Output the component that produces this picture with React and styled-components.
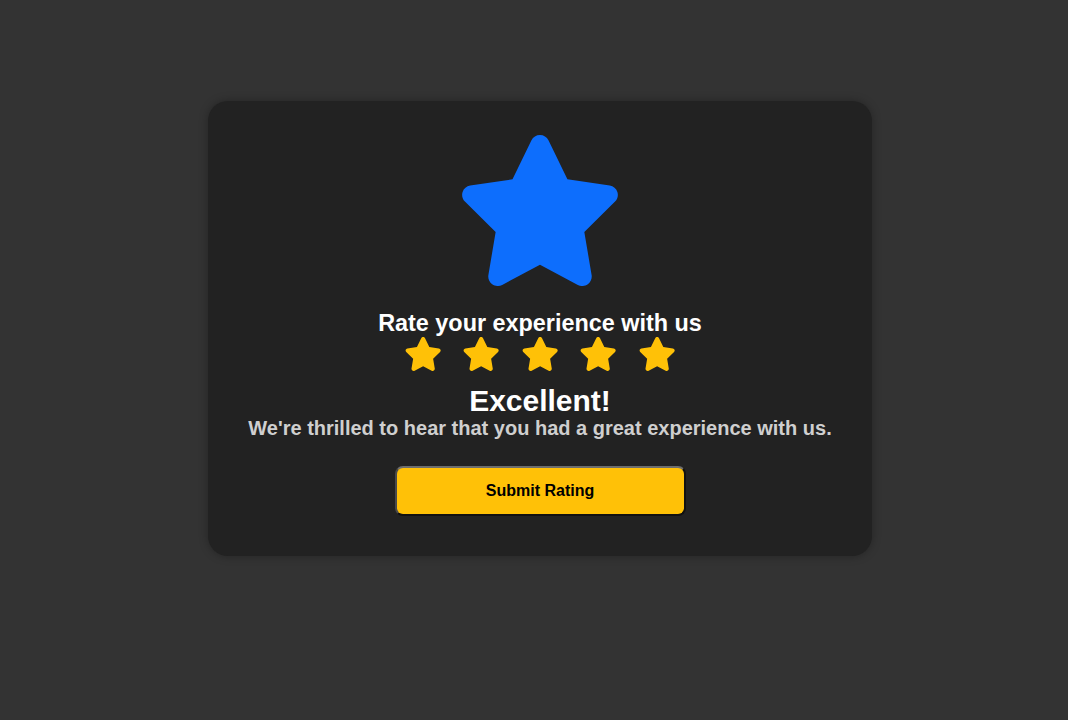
import React, { useState } from "react";
import styled, { createGlobalStyle } from "styled-components";

const Global = createGlobalStyle`
  html, body { margin: 0; padding: 0; background: #333333; }
  body { font-family: "Liberation Sans", Arial, sans-serif; }
`;

const Page = styled.div`
  min-height: 720px;
  display: flex;
  justify-content: center;
  align-items: flex-start;
  padding: 101px 0 0 12px;
  box-sizing: border-box;
`;

const Card = styled.div`
  width: 664px;
  box-sizing: border-box;
  background: #222222;
  border-radius: 20px;
  box-shadow: 0 0 10px rgba(0, 0, 0, 0.3);
  display: flex;
  flex-direction: column;
  align-items: center;
  padding: 34px 0 40px;
  color: #ffffff;
`;

const STAR =
  "M316.9 18C311.6 7 300.4 0 288.1 0s-23.4 7-28.8 18L195 150.3 51.4 171.5c-12 1.8-22 10.2-25.7 21.7s-.7 24.2 7.9 32.7L137.8 329 113.2 474.7c-2 12 3 24.2 12.9 31.3s23 8 33.8 2.3l128.3-68.5 128.3 68.5c10.8 5.7 23.9 4.9 33.8-2.3s14.9-19.3 12.9-31.3L438.5 329 542.7 225.9c8.6-8.5 11.7-21.2 7.9-32.7s-13.7-19.9-25.7-21.7L381.2 150.3 316.9 18z";

const Star = ({ height, color }) => (
  <svg width={(height * 576) / 512} height={height} viewBox="0 0 576 512" fill={color}>
    <path d={STAR} />
  </svg>
);

const BigStar = styled.div`
  display: flex;
  line-height: 0;
`;

const Title = styled.h3`
  margin: 24px 0 0;
  font-size: 23.4px;
  font-weight: bold;
  line-height: 27px;
`;

const StarRow = styled.div`
  display: flex;
  gap: 20.25px;
  line-height: 0;
`;

const StarButton = styled.button`
  background: none;
  border: none;
  padding: 0;
  cursor: pointer;
  display: flex;
`;

const Verdict = styled.h2`
  margin: 13px 0 0;
  font-size: 30px;
  font-weight: bold;
  line-height: 33px;
`;

const Message = styled.p`
  margin: 0;
  font-size: 20px;
  font-weight: bold;
  color: #cfcfcf;
  line-height: 23px;
`;

const Submit = styled.button`
  margin-top: 26px;
  width: 291px;
  height: 50px;
  box-sizing: border-box;
  background: #ffc107;
  color: #000;
  font-family: "Liberation Sans", Arial, sans-serif;
  font-size: 16px;
  font-weight: bold;
  border: 2px solid;
  border-color: #6e6e6e #111111 #111111 #4a4a4a;
  border-radius: 8px;
  cursor: pointer;
`;

export default function App() {
  const [rating, setRating] = useState(5);
  return (
    <>
      <Global />
      <Page>
        <Card>
          <BigStar>
            <Star height={151} color="#0d6efd" />
          </BigStar>
          <Title>Rate your experience with us</Title>
          <StarRow>
            {[1, 2, 3, 4, 5].map((n) => (
              <StarButton key={n} onClick={() => setRating(n)} aria-label={`${n} stars`}>
                <Star height={34} color={n <= rating ? "#ffc107" : "#555"} />
              </StarButton>
            ))}
          </StarRow>
          <Verdict>Excellent!</Verdict>
          <Message>We're thrilled to hear that you had a great experience with us.</Message>
          <Submit>Submit Rating</Submit>
        </Card>
      </Page>
    </>
  );
}
